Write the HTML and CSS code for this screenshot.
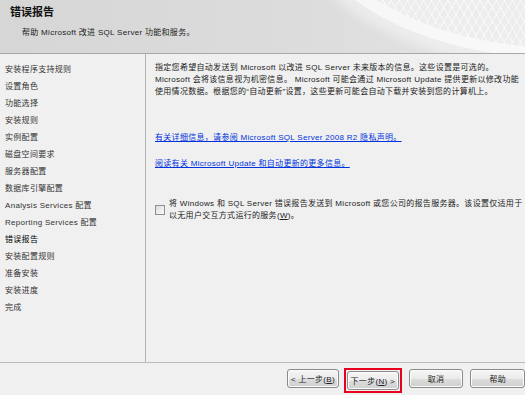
FILE: index.html
```html
<!DOCTYPE html>
<html lang="zh-CN">
<head>
  <meta charset="UTF-8" />
  <title>错误报告</title>
  <link rel="stylesheet" href="styles.css">
</head>
<body>
  <div class="wizard">
    <div class="header">
      <div class="mesh"></div>
      <h1 class="title">错误报告</h1>
      <p class="subtitle">帮助 Microsoft 改进 SQL Server 功能和服务。</p>
    </div>

    <div class="main">
      <ul class="steps">
        <li>安装程序支持规则</li>
        <li>设置角色</li>
        <li>功能选择</li>
        <li>安装规则</li>
        <li>实例配置</li>
        <li>磁盘空间要求</li>
        <li>服务器配置</li>
        <li>数据库引擎配置</li>
        <li>Analysis Services 配置</li>
        <li>Reporting Services 配置</li>
        <li class="current">错误报告</li>
        <li>安装配置规则</li>
        <li>准备安装</li>
        <li>安装进度</li>
        <li>完成</li>
      </ul>

      <div class="content">
        <p class="intro">指定您希望自动发送到 Microsoft 以改进 SQL Server 未来版本的信息。这些设置是可选的。<br>Microsoft 会将该信息视为机密信息。 Microsoft 可能会通过 Microsoft Update 提供更新以修改功能<br>使用情况数据。根据您的“自动更新”设置，这些更新可能会自动下载并安装到您的计算机上。</p>
        <a class="link first" href="#">有关详细信息，请参阅 Microsoft SQL Server 2008 R2 隐私声明。</a>
        <a class="link" href="#">阅读有关 Microsoft Update 和自动更新的更多信息。</a>
        <label class="option">
          <span class="check"></span>
          <span>将 Windows 和 SQL Server 错误报告发送到 Microsoft 或您公司的报告服务器。该设置仅适用于<br>以无用户交互方式运行的服务(<u>W</u>)。</span>
        </label>
      </div>
    </div>

    <div class="footer">
      <button class="btn">&lt; 上一步(<u>B</u>)</button>
      <span class="marked"><button class="btn">下一步(<u>N</u>) &gt;</button></span>
      <button class="btn wide">取消</button>
      <button class="btn wide">帮助</button>
    </div>
  </div>
</body>
</html>
```

FILE: styles.css
```css
body {
  margin: 0;
  background-color: #f0f0f0;
  font-family: 'Liberation Sans', 'Noto Sans CJK SC', sans-serif;
  font-size: 8px;
  letter-spacing: 0.3px;
  color: #1e1e1e;
  overflow: hidden;
}

.wizard {
  width: 525px;
  height: 395px;
  display: flex;
  flex-direction: column;
}

.header {
  position: relative;
  height: 54px;
  box-sizing: border-box;
  padding: 3px 10px 0;
  background: linear-gradient(90deg, #d6d6d6 0%, #dcdcdc 55%, #e4e4e4 100%);
  border-bottom: 1px solid #a8a8a8;
  overflow: hidden;
}

.mesh {
  position: absolute;
  top: -262px;
  left: 305px;
  width: 520px;
  height: 310px;
  border-radius: 50%;
  box-shadow: -6px 6px 0 4px rgba(255, 255, 255, 0.6),
              -12px 14px 10px 6px rgba(255, 255, 255, 0.4);
  background: repeating-linear-gradient(60deg, rgba(255, 255, 255, 0.6) 0 1px, transparent 1px 7px),
              repeating-linear-gradient(-60deg, rgba(255, 255, 255, 0.6) 0 1px, transparent 1px 7px),
              #ededed;
}

.title {
  position: relative;
  margin: 0;
  font-size: 11px;
  font-weight: bold;
  letter-spacing: 0;
  color: #111;
}

.subtitle {
  position: relative;
  margin: 7px 0 0 12px;
  font-size: 8px;
  color: #222;
}

.main {
  display: flex;
  height: 308px;
  border-bottom: 1px solid #bcbcbc;
}

.steps {
  list-style: none;
  margin: 0;
  padding: 7px 0 0 5px;
  width: 140px;
  border-right: 1px solid #b4b4b4;
}

.steps li {
  height: 17px;
  line-height: 17px;
  color: #333;
  white-space: nowrap;
}

.steps .current {
  color: #000;
}

.content {
  flex: 1;
  padding: 8px 0 0 9px;
  display: flex;
  flex-direction: column;
  align-items: flex-start;
  overflow: hidden;
  white-space: nowrap;
}

.intro {
  margin: 0;
  line-height: 12px;
  color: #222;
}

.link {
  color: #0033dd;
  text-decoration: underline;
  line-height: 12px;
  margin-top: 14px;
}

.link.first {
  margin-top: 34px;
}

.option {
  display: flex;
  align-items: center;
  gap: 4px;
  margin-top: 28px;
  line-height: 12px;
  color: #222;
}

.check {
  flex: none;
  width: 8px;
  height: 8px;
  border: 1px solid #8e8f8f;
  background: linear-gradient(135deg, #dcdcdc, #fbfbfb);
}

.footer {
  flex: 1;
  display: flex;
  align-items: flex-start;
  gap: 7px;
  padding: 6px 0 0 287px;
}

.btn {
  height: 19px;
  padding: 0;
  width: 55px;
  font-family: inherit;
  font-size: 8px;
  letter-spacing: inherit;
  color: #222;
  border: 1px solid #8a8a8a;
  border-radius: 3px;
  background: linear-gradient(#f6f6f6 0%, #ebebeb 50%, #dddddd 51%, #cfcfcf 100%);
  box-shadow: inset 0 0 0 1px #fcfcfc;
}

.btn.wide {
  width: 58px;
}

.marked {
  display: flex;
  margin: -1px 0 0 -2px;
  padding: 1px;
  border: 2px solid #e8001c;
}

.marked .btn {
  width: 52px;
}
```
